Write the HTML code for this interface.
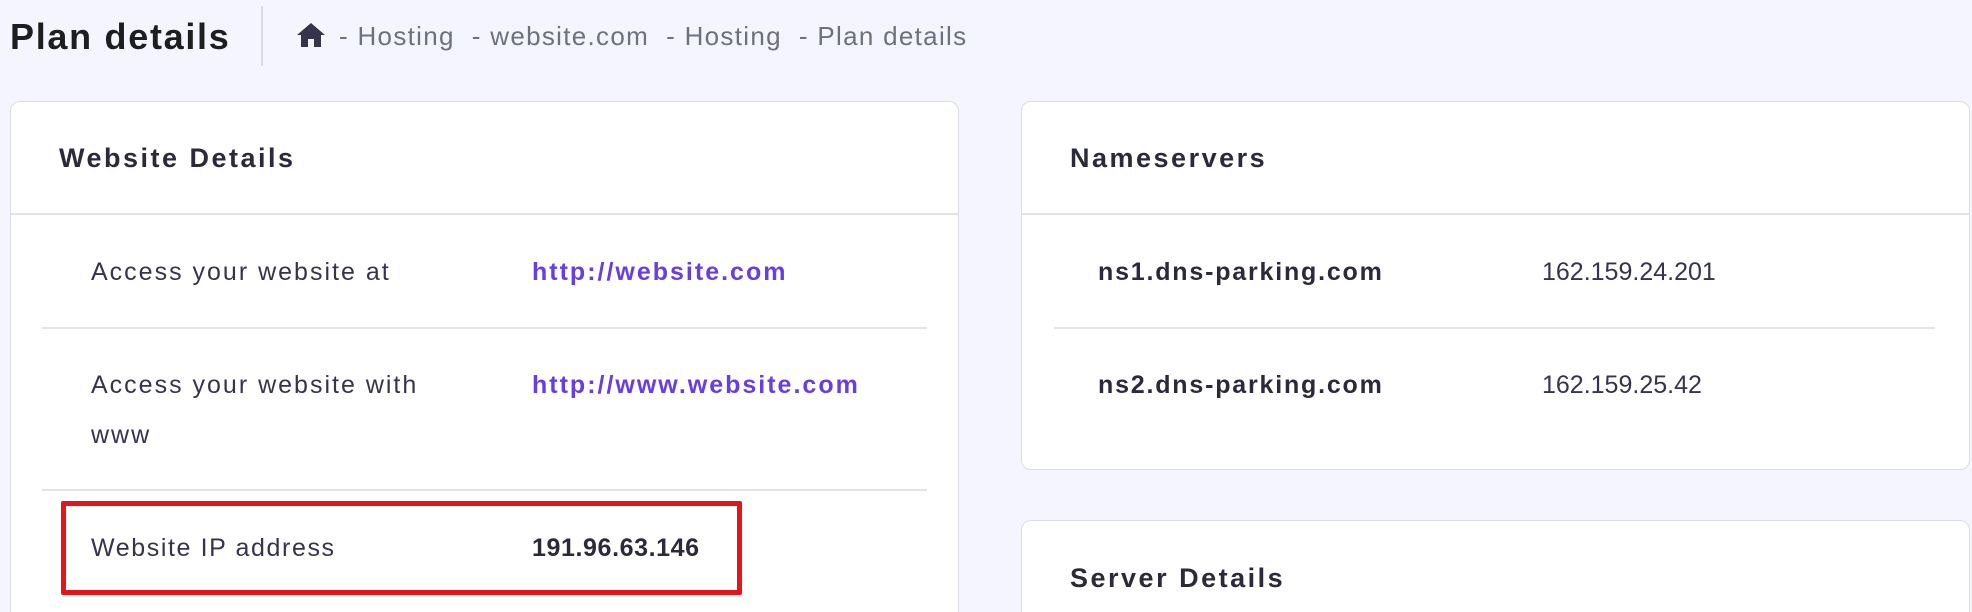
<!DOCTYPE html>
<html style="width:1972px;height:612px;overflow:hidden"><head><meta charset="utf-8"><style>
*{margin:0;padding:0;box-sizing:border-box}
body{width:1972px;height:612px;overflow:hidden;background:#f4f5ff;font-family:"Liberation Sans",sans-serif;color:#36344d}
#w{position:relative;width:1972px;height:612px;overflow:hidden}
.a{position:absolute;white-space:nowrap}
.card{position:absolute;background:#fff;border:1px solid #dcdce6;border-radius:10px}
.open{border-bottom:none;border-radius:10px 10px 0 0}
.hl{position:absolute;height:2px;background:#e3e3ea}
.b{font-weight:bold;color:#2b2a3a}
.lnk{color:#673de6;font-weight:bold;letter-spacing:2.8px}
.r{font-size:25px;letter-spacing:2px}
.bb{letter-spacing:1.8px}
.h{font-size:27px;letter-spacing:2.5px}
</style></head><body><div id="w">
<div class="a b" style="left:10px;top:16px;font-size:36px;color:#1d1e20;letter-spacing:1.7px">Plan details</div>
<div style="position:absolute;left:261px;top:6px;width:2px;height:60px;background:#dcdce6"></div>
<svg class="a" style="left:296px;top:22px" width="30" height="26" viewBox="0 0 30 26"><path d="M15 1 L1 13 H5 V25 H12 V17 H18 V25 H25 V13 H29 Z" fill="#36344d"/></svg>
<div class="a" style="left:339px;top:21px;font-size:26px;color:#6d7081;letter-spacing:1.3px">- Hosting &nbsp;- website.com &nbsp;- Hosting &nbsp;- Plan details</div>

<div class="card open" style="left:10px;top:101px;width:949px;height:511px"></div>
<div class="hl" style="left:11px;top:213px;width:947px"></div>
<div class="a b h" style="left:59px;top:143px">Website Details</div>
<div class="a r" style="left:91px;top:258px">Access your website at</div>
<div class="a r lnk" style="left:532px;top:258px">http://website.com</div>
<div class="hl" style="left:42px;top:327px;width:885px"></div>
<div class="a r" style="left:91px;top:371px">Access your website with</div>
<div class="a r" style="left:91px;top:421px">www</div>
<div class="a r lnk" style="left:532px;top:371px">http://www.website.com</div>
<div class="hl" style="left:42px;top:489px;width:885px"></div>
<div class="a r" style="left:91px;top:534px;letter-spacing:1.6px">Website IP address</div>
<div class="a b r" style="left:532px;top:534px;letter-spacing:0.6px">191.96.63.146</div>
<div style="position:absolute;left:61px;top:501px;width:681px;height:94px;border:5px solid #e8141a;border-radius:2px"></div>

<div class="card" style="left:1021px;top:101px;width:949px;height:369px"></div>
<div class="hl" style="left:1022px;top:213px;width:947px"></div>
<div class="a b h" style="left:1070px;top:143px">Nameservers</div>
<div class="a b r bb" style="left:1098px;top:258px">ns1.dns-parking.com</div>
<div class="a r" style="left:1542px;top:258px;letter-spacing:0">162.159.24.201</div>
<div class="hl" style="left:1054px;top:327px;width:881px"></div>
<div class="a b r bb" style="left:1098px;top:371px">ns2.dns-parking.com</div>
<div class="a r" style="left:1542px;top:371px;letter-spacing:0">162.159.25.42</div>

<div class="card open" style="left:1021px;top:520px;width:949px;height:92px"></div>
<div class="a b h" style="left:1070px;top:563px">Server Details</div>
</div></body></html>
